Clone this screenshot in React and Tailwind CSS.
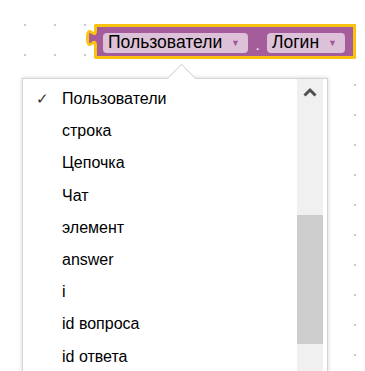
import React from "react";

const items = ["Пользователи", "строка", "Цепочка", "Чат", "элемент", "answer", "i", "id вопроса", "id ответа"];

const Field = ({ label, width }) => (
  <div
    className="flex items-center justify-between h-[20px] rounded-[4px] bg-[#dcc1d8] pl-[5px] pr-[8px] text-[17.5px] text-black"
    style={{ width }}
  >
    <span className="leading-none">{label}</span>
    <span className="text-[9px] text-[#a4589c] leading-none">▼</span>
  </div>
);

const App = () => {
  return (
    <div
      className="relative w-[365px] h-[371px] overflow-hidden bg-white bg-[radial-gradient(circle,#c9c9c9_1px,transparent_1.6px)] bg-[length:30px_30px] bg-[position:10px_10px]"
      style={{ fontFamily: '"Liberation Sans", Arial, sans-serif' }}
    >
      {/* block on the workspace */}
      <div className="absolute left-[86px] top-[22px] w-[272px] h-[40px]">
        <svg className="absolute inset-0" width="272" height="40" viewBox="0 0 272 40">
          <path
            d="M 9.5,3.5 V 8.5 c 0,10 -8,-8 -8,7.5 s 8,-2.5 8,7.5 V 35.5 H 268.5 V 3.5 Z"
            fill="#a55c9b"
            stroke="#f9c20f"
            strokeWidth="3"
            strokeLinejoin="round"
          />
        </svg>
        <div className="relative flex items-center pl-[17px] pt-[11px]">
          <Field label="Пользователи" width={145} />
          <span className="w-[19px] text-center text-white text-[15px] leading-none pt-[2px]">.</span>
          <Field label="Логин" width={78} />
        </div>
      </div>

      {/* dropdown */}
      <div className="absolute left-[22px] top-[78px] w-[306px] h-[310px] bg-white border border-[#d4d4d4] shadow-[0_0_4px_rgba(0,0,0,0.18)]">
        <div className="absolute left-[148px] -top-[11px] w-[21px] h-[21px] rotate-45 bg-white border-l border-t border-[#d4d4d4]" />
        <div className="relative flex h-full">
          <div className="flex-1 pt-[4px] text-[16px] text-black">
            {items.map((item, i) => (
              <div key={i} className="flex items-center h-[32.2px]">
                <span className="w-[39px] pl-[13px] text-[15px] text-[#333]">{i === 0 ? "✓" : ""}</span>
                <span>{item}</span>
              </div>
            ))}
          </div>
          <div className="w-[26px] mr-[4px] bg-[#f0f0f0] flex flex-col items-center">
            <svg className="mt-[8px]" width="14" height="10" viewBox="0 0 14 10">
              <path d="M1.5 8.5 L7 3 L12.5 8.5" fill="none" stroke="#505050" strokeWidth="3" />
            </svg>
            <div className="mt-[118px] w-full h-[129px] bg-[#cdcdcd]" />
          </div>
        </div>
      </div>
    </div>
  );
};

export default App;
